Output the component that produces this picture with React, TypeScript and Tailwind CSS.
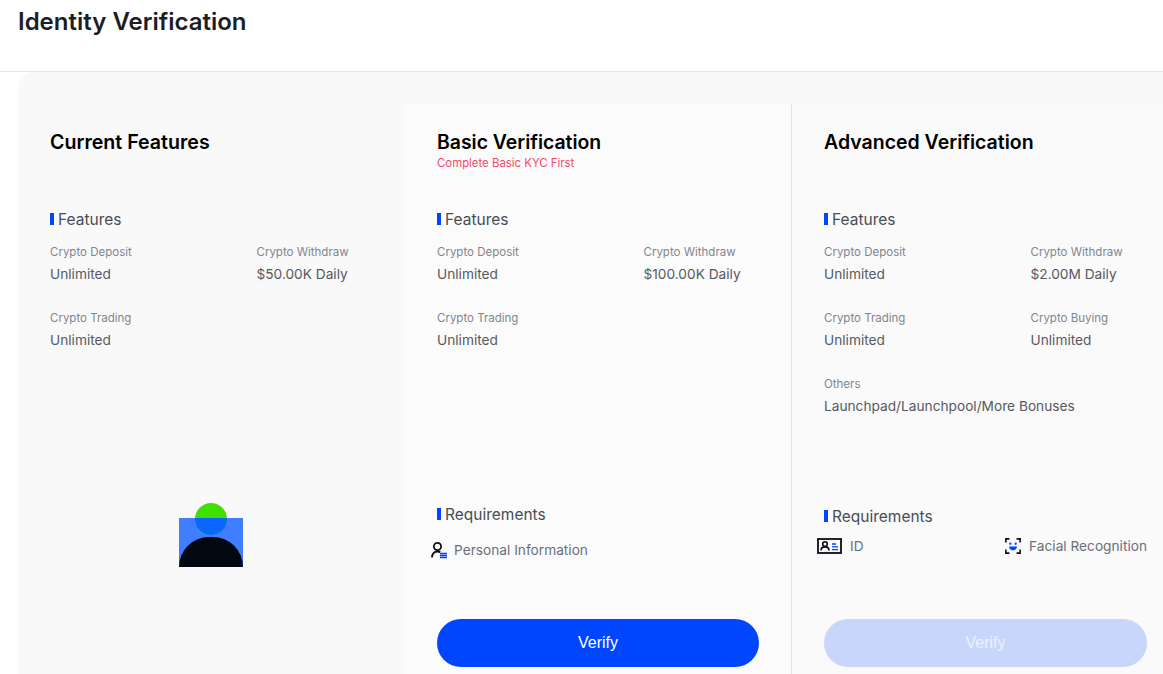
const font = { fontFamily: "Inter, 'Noto Sans', sans-serif" };

function SectionLabel({ children, className = "" }: { children: string; className?: string }) {
  return (
    <div className={`flex items-center h-5 text-[15.5px] leading-5 text-[#474d57] ${className}`}>
      <span className="w-1 h-3 bg-[#0046ff] mr-1 mb-[2px]" />
      {children}
    </div>
  );
}

function Stat({ label, value, wide = false }: { label: string; value: string; wide?: boolean }) {
  return (
    <div className={`h-[66px] ${wide ? "col-span-2" : ""}`}>
      <div className="text-[11.5px] leading-4 text-[#81858c] mt-[5px]">{label}</div>
      <div className="text-[13.7px] leading-5 mt-[4px] text-[#55595f] whitespace-nowrap">{value}</div>
    </div>
  );
}

function PersonIcon() {
  return (
    <svg width="16" height="17" viewBox="0 0 16 17" fill="none">
      <circle cx="6.5" cy="4.5" r="3.6" stroke="#0b0e14" strokeWidth="1.8" />
      <path d="M1 15.500c0-3.700 2.200-6 5.500-6 1.200 0 2 .2 2.800.6" stroke="#0b0e14" strokeWidth="1.800" />
      <path d="M9 11.500h7M9 13.500h7M9 15.500h7" stroke="#0046ff" strokeWidth="1.400" />
    </svg>
  );
}

function IdIcon() {
  return (
    <svg width="25" height="16" viewBox="0 0 25 16" fill="none">
      <rect x="1" y="1" width="23" height="14" stroke="#0b0e14" strokeWidth="1.800" />
      <circle cx="8" cy="6" r="2.300" stroke="#0b0e14" strokeWidth="1.600" />
      <path d="M4 12.500c0-2.500 1.600-3.600 4-3.600s4 1.100 4 3.600" stroke="#0b0e14" strokeWidth="1.600" />
      <path d="M15 6h4M15 8.800h6M15 11.600h6" stroke="#0046ff" strokeWidth="1.300" />
    </svg>
  );
}

function FaceIcon() {
  return (
    <svg width="16" height="16" viewBox="0 0 18 18" fill="none">
      <path d="M1 5V1h4M13 1h4v4M17 13v4h-4M5 17H1v-4" stroke="#0b0e14" strokeWidth="1.800" />
      <circle cx="6" cy="6.500" r="1.300" fill="#0046ff" />
      <circle cx="12" cy="6.500" r="1.300" fill="#0046ff" />
      <path d="M4.500 9.500h9c0 2.600-2 4.200-4.500 4.200S4.500 12.100 4.500 9.500z" fill="#0046ff" />
    </svg>
  );
}

function VerifyButton({ disabled = false }: { disabled?: boolean }) {
  return (
    <button
      className={`w-full h-12 rounded-full text-base ${
        disabled ? "bg-[#c8d6fb] text-[#eef2fe]" : "bg-[#0046ff] text-white"
      }`}
      style={{ fontFamily: "'Liberation Sans', sans-serif" }}
    >
      Verify
    </button>
  );
}

export default function App() {
  return (
    <div className="h-[674px] overflow-hidden bg-white" style={font}>
      <div className="h-[72px] border-b border-[#e6e6e6] pl-[18px] pt-[6px]">
        <h1 className="text-2xl leading-8 font-semibold text-[#1c1e26]">Identity Verification</h1>
      </div>

      <div className="ml-[18px] bg-[#f9f9f9] rounded-tl-2xl pt-8 grid grid-cols-[386px_387px_1fr] h-[602px]">
        {/* Current */}
        <div className="pt-[26px] pl-8 pr-8">
          <h2 className="text-[19.6px] leading-6 font-semibold text-black h-[80px]">Current Features</h2>
          <SectionLabel>Features</SectionLabel>
          <div className="grid grid-cols-[206.5px_1fr] mt-[9px]">
            <Stat label="Crypto Deposit" value="Unlimited" />
            <Stat label="Crypto Withdraw" value="$50.00K Daily" />
            <Stat label="Crypto Trading" value="Unlimited" />
          </div>
          <div className="relative mx-auto mt-[132px] w-16 h-16">
            <div className="absolute left-0 right-0 bottom-0 top-[15px] bg-[#3f7fff]" />
            <div className="absolute left-[16px] top-0 w-8 h-8 rounded-full bg-[#3fe000] overflow-hidden">
              <div className="mt-[15px] h-[17px] bg-[#0a66ff]" />
            </div>
            <div className="absolute left-0 bottom-0 w-16 h-[30px] rounded-t-full bg-[#020812]" />
          </div>
        </div>

        {/* Basic */}
        <div className="bg-[#fbfbfb] pt-[26px] pl-[33px] pr-8 flex flex-col">
          <h2 className="text-[19.4px] leading-6 font-semibold text-black">Basic Verification</h2>
          <p className="text-[11.4px] leading-4 text-[#f0496c] mt-[1px] h-[55px]">Complete Basic KYC First</p>
          <SectionLabel>Features</SectionLabel>
          <div className="grid grid-cols-[206.5px_1fr] mt-[9px]">
            <Stat label="Crypto Deposit" value="Unlimited" />
            <Stat label="Crypto Withdraw" value="$100.00K Daily" />
            <Stat label="Crypto Trading" value="Unlimited" />
          </div>
          <SectionLabel className="mt-[134px]">Requirements</SectionLabel>
          <div className="flex items-center mt-[15px] -ml-[6px] text-[13.7px] leading-5 text-[#6b7078]">
            <PersonIcon />
            <span className="ml-[7px]">Personal Information</span>
          </div>
          <div className="mt-[59px]">
            <VerifyButton />
          </div>
        </div>

        {/* Advanced */}
        <div className="bg-[#fafafa] border-l border-[#e4e4e4] pt-[26px] pl-8 pr-4 flex flex-col">
          <h2 className="text-[19.5px] leading-6 font-semibold text-black h-[80px]">Advanced Verification</h2>
          <SectionLabel>Features</SectionLabel>
          <div className="grid grid-cols-[206.5px_1fr] mt-[9px]">
            <Stat label="Crypto Deposit" value="Unlimited" />
            <Stat label="Crypto Withdraw" value="$2.00M Daily" />
            <Stat label="Crypto Trading" value="Unlimited" />
            <Stat label="Crypto Buying" value="Unlimited" />
            <Stat label="Others" value="Launchpad/Launchpool/More Bonuses" wide />
          </div>
          <SectionLabel className="mt-[70px]">Requirements</SectionLabel>
          <div className="flex items-center justify-between mt-[9px] -ml-[7px] text-[13.7px] leading-5 text-[#6b7078]">
            <div className="flex items-center">
              <IdIcon />
              <span className="ml-2">ID</span>
            </div>
            <div className="flex items-center">
              <FaceIcon />
              <span className="ml-2">Facial Recognition</span>
            </div>
          </div>
          <div className="mt-[63px]">
            <VerifyButton disabled />
          </div>
        </div>
      </div>
    </div>
  );
}
